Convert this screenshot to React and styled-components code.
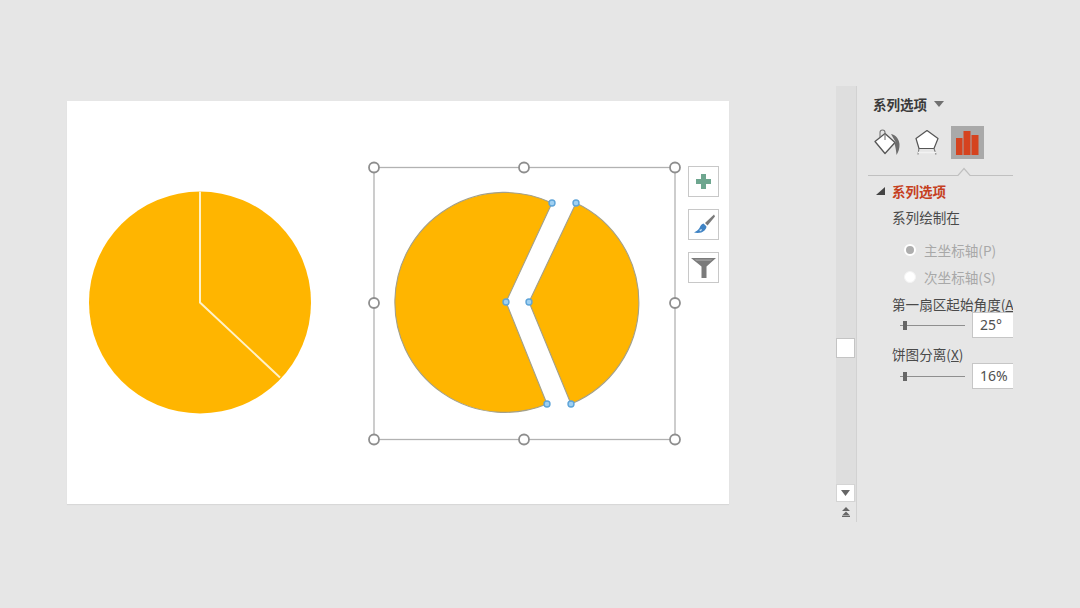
import React from "react";
import styled, { createGlobalStyle } from "styled-components";

const Global = createGlobalStyle`
  html, body { margin: 0; padding: 0; background: #e6e6e6; overflow: hidden; }
  * { box-sizing: border-box; }
`;

const Page = styled.div`
  width: 1080px;
  height: 608px;
  background: #e6e6e6;
  display: flex;
  align-items: flex-start;
  padding: 86px 0 0 67px;
  font-family: "Noto Sans CJK SC", "Liberation Sans", sans-serif;
`;

const Slide = styled.div`
  position: relative;
  width: 662px;
  height: 403px;
  margin-top: 15px;
  background: #fff;
  box-shadow: 0 1px 1px rgba(0, 0, 0, 0.06);
`;

const Canvas = styled.svg`
  position: absolute;
  inset: 0;
`;

const ChartTools = styled.div`
  position: absolute;
  left: 621px;
  top: 65px;
  display: flex;
  flex-direction: column;
  gap: 12px;
`;

const ToolButton = styled.div`
  width: 31px;
  height: 31px;
  background: #fff;
  border: 1px solid #c8c8c8;
  display: flex;
  align-items: center;
  justify-content: center;
`;

const Panel = styled.aside`
  width: 177px;
  height: 436px;
  margin-left: 107px;
  display: flex;
`;

const Rail = styled.div`
  width: 21px;
  height: 100%;
  display: flex;
  flex-direction: column;
  background: #dedede;
  border-right: 1px solid #d2d2d2;
`;

const RailTrack = styled.div`
  flex: 1;
  padding-top: 252px;
`;

const Thumb = styled.div`
  width: 19px;
  height: 20px;
  background: #fff;
  border: 1px solid #c4c4c4;
`;

const RailButton = styled.div`
  width: 19px;
  height: 18px;
  background: #fff;
  border: 1px solid #d4d4d4;
  display: flex;
  align-items: center;
  justify-content: center;
`;

const Collapse = styled.div`
  height: 20px;
  background: #e6e6e6;
  display: flex;
  align-items: center;
  justify-content: center;
`;

const Pane = styled.div`
  width: 156px;
  height: 100%;
  overflow: hidden;
  padding-top: 9px;
`;

const Title = styled.div`
  display: flex;
  align-items: center;
  gap: 7px;
  height: 18px;
  padding-left: 16px;
  font-size: 13.5px;
  font-weight: 700;
  color: #3a3a3a;
  white-space: nowrap;
`;

const Caret = styled.span`
  width: 0;
  height: 0;
  border-left: 5px solid transparent;
  border-right: 5px solid transparent;
  border-top: 6px solid #707070;
`;

const IconRow = styled.div`
  display: flex;
  align-items: center;
  gap: 12px;
  height: 33px;
  margin-top: 13px;
  padding-left: 16px;
`;

const IconCell = styled.div`
  width: ${(p) => p.$w}px;
  height: 33px;
  display: flex;
  align-items: center;
  justify-content: center;
  background: ${(p) => (p.$active ? "#a9a9a9" : "transparent")};
`;

const Notch = styled.svg`
  display: block;
  margin: 8px 0 0 11px;
`;

const Section = styled.div`
  display: flex;
  align-items: center;
  gap: 7px;
  height: 18px;
  margin-top: 5px;
  padding-left: 19px;
  font-size: 13.5px;
  font-weight: 700;
  color: #c5401f;
  white-space: nowrap;
`;

const Expander = styled.span`
  width: 0;
  height: 0;
  border-left: 9px solid transparent;
  border-bottom: 8px solid #444;
`;

const Label = styled.div`
  height: 18px;
  margin-top: ${(p) => p.$top}px;
  padding-left: 35px;
  font-size: 13.6px;
  line-height: 18px;
  color: #4a4a4a;
  white-space: nowrap;
`;

const Radio = styled.div`
  display: flex;
  align-items: center;
  gap: 8px;
  height: 18px;
  margin-top: ${(p) => p.$top}px;
  padding-left: 47px;
  font-size: 13.6px;
  color: #a8a8a8;
  white-space: nowrap;
`;

const RadioDot = styled.span`
  width: 12px;
  height: 12px;
  border-radius: 50%;
  background: ${(p) => (p.$on ? "#adadad" : "#fff")};
  border: ${(p) => (p.$on ? "2.5px solid #fff" : "1px solid #f4f4f4")};
`;

const SliderRow = styled.div`
  display: flex;
  align-items: center;
  height: 26px;
  margin-top: ${(p) => p.$top}px;
  padding-left: 43px;
`;

const SliderTrack = styled.div`
  position: relative;
  flex: none;
  width: 65px;
  height: 1px;
  background: #8f8f8f;
`;

const SliderKnob = styled.span`
  position: absolute;
  left: 3px;
  top: -4px;
  width: 4px;
  height: 9px;
  background: #666;
`;

const Field = styled.div`
  width: 60px;
  height: 26px;
  margin-left: 7px;
  padding-left: 7px;
  flex: none;
  background: #fff;
  border: 1px solid #c6c6c6;
  font-size: 14px;
  line-height: 24px;
  color: #505050;
  font-family: "Noto Sans", "Liberation Sans", sans-serif;
`;

const Underlined = styled.span`
  text-decoration: underline;
`;

const ORANGE = "#ffb500";

/* Coordinates below are relative to the slide */
const Handle = ({ x, y }) => (
  <circle cx={x} cy={y} r="5" fill="#fff" stroke="#8e8e8e" strokeWidth="1.8" />
);
const Point = ({ x, y }) => (
  <circle cx={x} cy={y} r="3" fill="#9fd0f2" stroke="#5ea4d8" strokeWidth="1.4" />
);

const Charts = () => (
  <Canvas width="662" height="403">
    <circle cx="133" cy="201.5" r="111" fill={ORANGE} />
    <path d="M133 90.5V201.5L213 276.500" fill="none" stroke="#fff2c8" strokeWidth="2" />

    <rect x="307" y="66.500" width="301" height="272" fill="none" stroke="#b2b2b2" strokeWidth="1.3" />

    <path
      d="M485 102A110 110 0 1 0 480 303L439 201Z"
      fill={ORANGE}
      stroke="#a3a08a"
      strokeWidth="1.1"
    />
    <path
      d="M509 102A110 110 0 0 1 504 303L462 201Z"
      fill={ORANGE}
      stroke="#a3a08a"
      strokeWidth="1.1"
    />

    {[[307, 66.500], [457, 66.500], [608, 66.500], [307, 202], [608, 202], [307, 338.500], [457, 338.500], [608, 338.500]].map(
      ([x, y]) => <Handle key={`${x}-${y}`} x={x} y={y} />
    )}
    {[[485, 102], [509, 102], [439, 201], [462, 201], [480, 303], [504, 303]].map(([x, y]) => (
      <Point key={`${x}-${y}`} x={x} y={y} />
    ))}
  </Canvas>
);

const PlusIcon = () => (
  <svg width="17" height="17" viewBox="0 0 17 17">
    <path d="M6 1h5v5h5v5h-5v5H6v-5H1V6h5z" fill="#6ea68f" />
  </svg>
);

const BrushIcon = () => (
  <svg width="25" height="25" viewBox="0 0 25 25">
    <path d="M23 2.500 14 11l2.500 2.500L24 4.500z" fill="#7a7a7a" />
    <path d="M12.500 11.500c-2.500.5-3 2.500-4 4.500-1 1.500-3 3.500-5.500 4.500 3.500 1 8 .5 10.500-2 1.500-1.500 2.200-3 1.800-4.200z" fill="#3f83c4" />
    <path d="M8 18l3-1-1 2.500z" fill="#cfe3f4" />
  </svg>
);

const FunnelIcon = () => (
  <svg width="27" height="22" viewBox="0 0 27 22">
    <path d="M1 1h25l-9.500 8.500V21h-5V9.500z" fill="#7b7b7b" />
    <path d="M4.500 2.200h18l-2 1.800h-14z" fill="#9a9a9a" />
  </svg>
);

const BucketIcon = () => (
  <svg width="28" height="28" viewBox="0 0 28 28">
    <path d="M2 12.500 12 4.500 22 13.500 12 24.500z" fill="#fff" stroke="#555" strokeWidth="1.3" strokeLinejoin="round" />
    <path d="M7 8V3.500a2.500 2.500 0 0 1 5 0V11" fill="none" stroke="#777" strokeWidth="1.1" />
    <path d="M18 5c5 1 8 5 8.500 10 .2 4-1 8-3 11-.3-4-1-8-2-11.500l1-1.500z" fill="#6d6d6d" />
  </svg>
);

const PentagonIcon = () => (
  <svg width="26" height="28" viewBox="0 0 26 28">
    <path d="M14 1.500 25 9.500 21 19.500H6L3 9.500z" fill="#fff" stroke="#555" strokeWidth="1.2" strokeLinejoin="round" />
    <path d="M6 19.500 5 25.500M21 19.500l2 6" stroke="#777" strokeWidth="1.1" fill="none" />
    <path d="M5 23.500h18" stroke="#f2f2f2" strokeWidth="1.5" />
  </svg>
);

const BarsIcon = () => (
  <svg width="23" height="24" viewBox="0 0 23 24">
    <path d="M0 7h6.500v17H0zM7.500 0h7v24h-7zM15.500 4h7v20h-7z" fill="#d5431f" />
  </svg>
);

export default function App() {
  return (
    <Page>
      <Global />
      <Slide>
        <Charts />
        <ChartTools>
          <ToolButton><PlusIcon /></ToolButton>
          <ToolButton><BrushIcon /></ToolButton>
          <ToolButton><FunnelIcon /></ToolButton>
        </ChartTools>
      </Slide>
      <Panel>
        <Rail>
          <RailTrack><Thumb /></RailTrack>
          <RailButton>
            <svg width="9" height="6" viewBox="0 0 9 6"><path d="M0 0h9L4.500 6z" fill="#666" /></svg>
          </RailButton>
          <Collapse>
            <svg width="10" height="10" viewBox="0 0 10 10">
              <path d="M5 0l4 4H1zM5 4.500l4 4H1z" fill="#666" />
              <path d="M1 9h8v1H1z" fill="#666" />
            </svg>
          </Collapse>
        </Rail>
        <Pane>
          <Title>系列选项<Caret /></Title>
          <IconRow>
            <IconCell $w={28}><BucketIcon /></IconCell>
            <IconCell $w={26}><PentagonIcon /></IconCell>
            <IconCell $w={33} $active><BarsIcon /></IconCell>
          </IconRow>
          <Notch width="145" height="10" viewBox="0 0 145 10">
            <path d="M0 8.500H90L96 1.500 102 8.500H145" fill="none" stroke="#c0c0c0" strokeWidth="1.2" />
          </Notch>
          <Section><Expander />系列选项</Section>
          <Label $top={8}>系列绘制在</Label>
          <Radio $top={15}><RadioDot $on />主坐标轴(P)</Radio>
          <Radio $top={9}><RadioDot />次坐标轴(S)</Radio>
          <Label $top={9}>第一扇区起始角度(<Underlined>A</Underlined>)</Label>
          <SliderRow $top={-1}>
            <SliderTrack><SliderKnob /></SliderTrack>
            <Field>25°</Field>
          </SliderRow>
          <Label $top={7}>饼图分离(<Underlined>X</Underlined>)</Label>
          <SliderRow $top={0}>
            <SliderTrack><SliderKnob /></SliderTrack>
            <Field>16%</Field>
          </SliderRow>
        </Pane>
      </Panel>
    </Page>
  );
}
